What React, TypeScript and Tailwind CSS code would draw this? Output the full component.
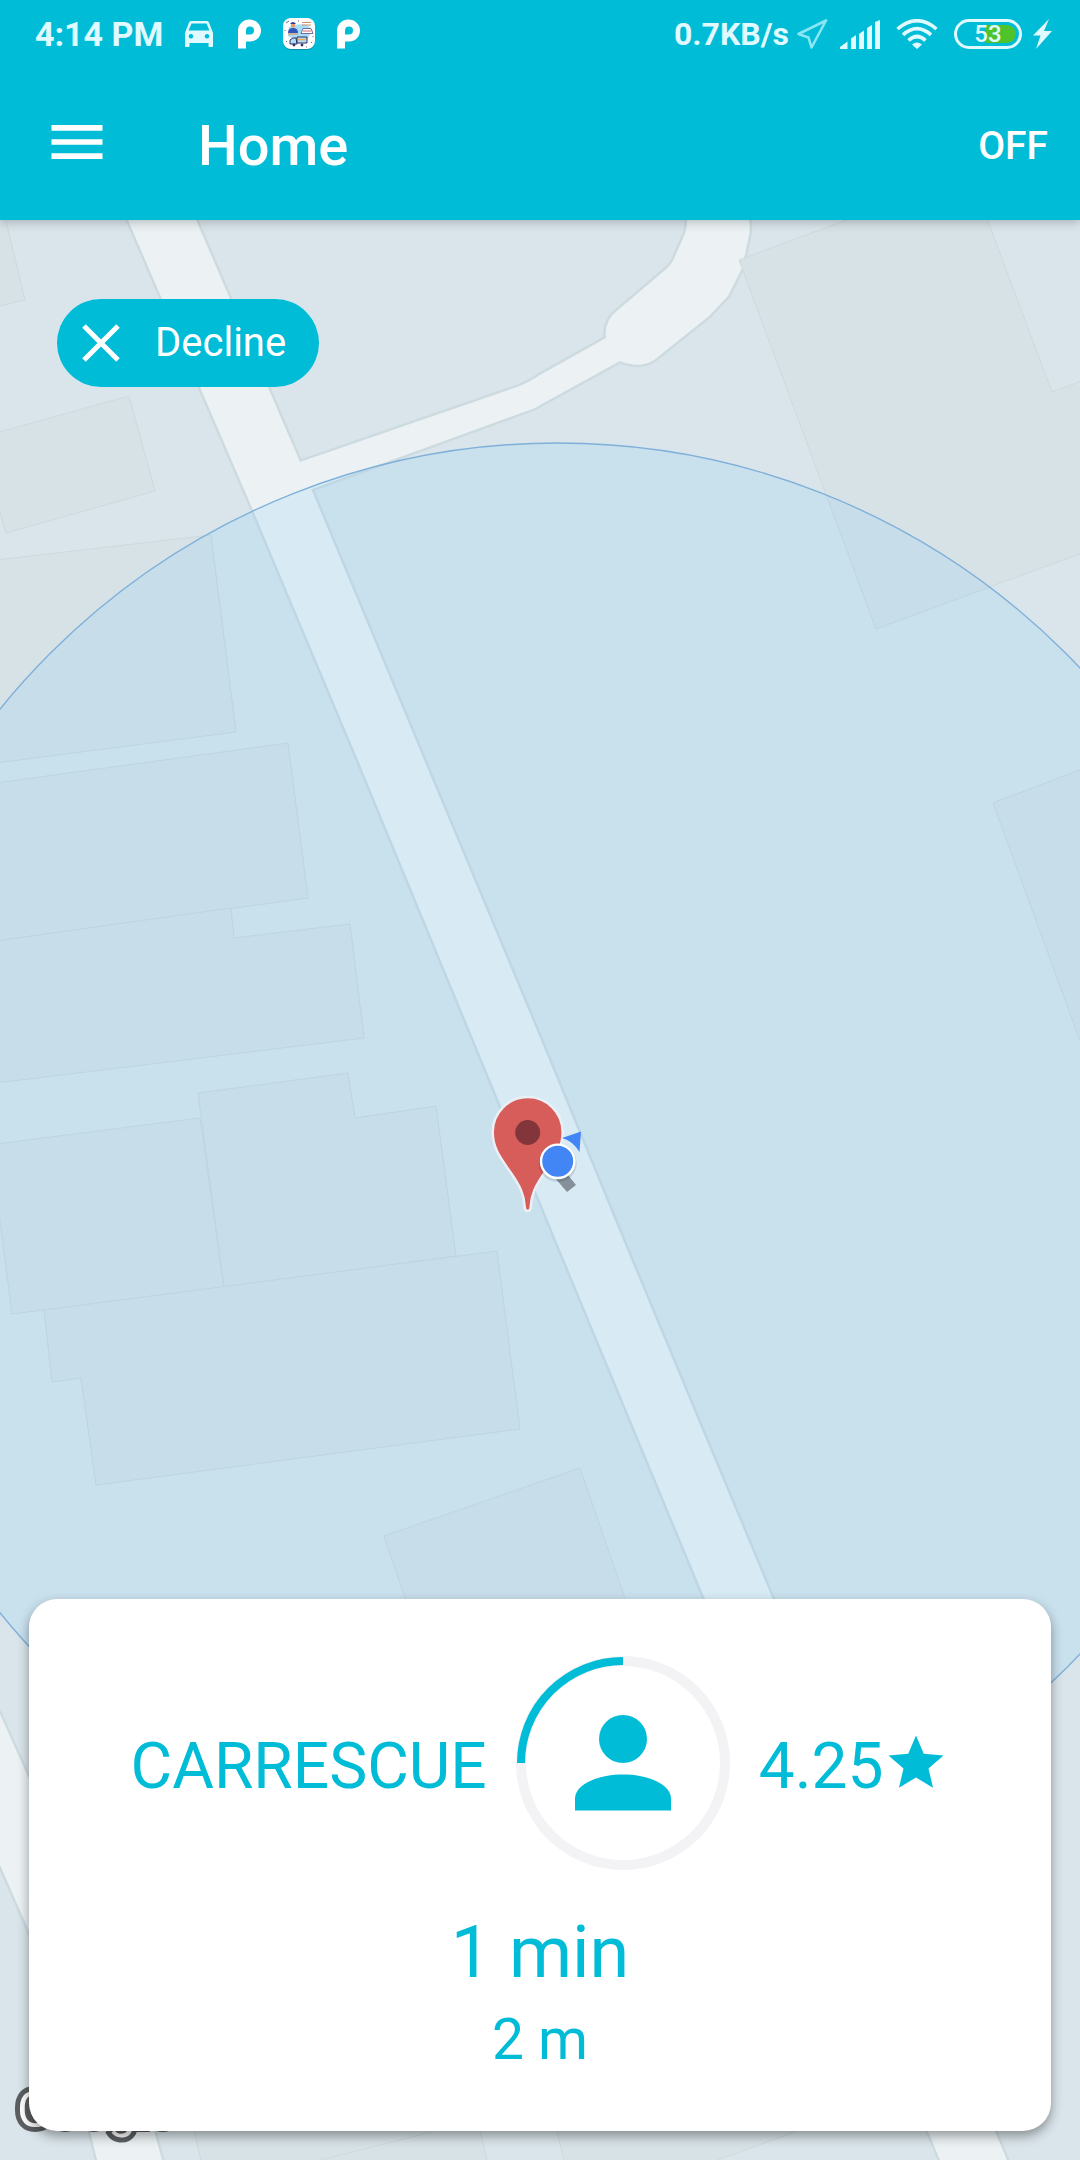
import React from "react";

const BUILDINGS = [
  "-4,200 1,200 25,300 -4,307",
  "-4,433 129,396 155,491 6,533 -4,498",
  "-4,560 211,535 236,732 -4,763",
  "-4,783 288,743 308,898 -4,941",
  "-4,941 231,908 234,938 350,924 364,1038 -4,1083",
  "-4,1144 200,1118 224,1287 12,1314 -4,1190",
  "198,1093 348,1073 355,1118 436,1106 456,1256 224,1287",
  "44,1310 497,1251 520,1429 96,1485 81,1378 52,1382",
  "384,1536 580,1468 660,1700 440,1700",
  "739,260 900,200 980,200 1052,392 1090,378 1090,550 876,629",
  "993,803 1090,766 1090,1068",
  "185,2090 471,2090 488,2165 202,2165",
  "547,2090 993,2060 704,2165 565,2165",
];

const ROADS = [
  "M280 469L300 462L517 387Q528 383 540 375L606 338Q604 320 618 310L664 271Q670 266 673 261L684 236Q687 230 687 220V200H749V220Q751 228 748 240L742 268L728 296L709 316L654 360Q640 369 620 361L540 405Q534 409 524 412L312 489L290 497Z",
  "M119 200L128 220L253 510L358 760L501 1106L556 1240L700 1587L940 2160L950 2180H1016L1007 2160L700 1425L623 1240L540 1038L424 760L300 462L196 220L187 200Z",
  "M-6 1701L29 1779L154 2131L162 2160L170 2180H102L90 2131L29 1931L-6 1851Z",
];

function MapView() {
  return (
    <svg
      className="absolute inset-0 h-full w-full"
      viewBox="0 220 1080 1940"
      preserveAspectRatio="xMidYMid slice"
      role="img"
      aria-label="Map"
    >
      <rect y="200" width="1080" height="1980" fill="#dae5eb" />
      <g fill="none" stroke="#cddbe1" strokeWidth="5" strokeLinejoin="round">
        {ROADS.map((d) => (
          <path key={d} d={d} />
        ))}
      </g>
      <g fill="#ecf2f4">
        {ROADS.map((d) => (
          <path key={d} d={d} />
        ))}
      </g>
      <g fill="#d7e2e7" stroke="#ccd9dd" strokeWidth="1">
        {BUILDINGS.map((points) => (
          <polygon key={points} points={points} />
        ))}
        <path d="M321 2160L435 2131" />
      </g>
      <circle cx="558" cy="1161" r="718" fill="#69c4f8" fillOpacity="0.15" stroke="#7fb0da" strokeWidth="1.4" />
      <path
        d="M527.7 1211c-2.500 0-3-1.500-3-4-.5-13-5-21-13-33-9-13.500-19-24-19-42a35 35 0 0 1 70 0c0 18-10 28.500-19 42-8 12-12.500 20-13 33 0 2.500-.5 4-3 4z"
        fill="#d75d5a"
        stroke="#eaf0f6"
        strokeWidth="2.500"
      />
      <circle cx="527.7" cy="1132.500" r="12.500" fill="#82363c" />
      <path d="M555 1178L567 1192L576 1185L564 1170Z" fill="#84919a" />
      <path d="M562 1138L581 1131.500L579.500 1152Q573 1141 562 1138Z" fill="#4285f4" />
      <circle cx="557.700" cy="1163" r="19" fill="#000" fillOpacity="0.12" />
      <circle cx="557.700" cy="1161.300" r="16.700" fill="#4285f4" stroke="#fff" strokeWidth="2.400" />
    </svg>
  );
}

function ParkingGlyph() {
  return (
    <svg className="h-[30px] w-[23px]" viewBox="0 0 23 30" fill="#fff" aria-hidden="true">
      <path
        fillRule="evenodd"
        d="M0 29.500V11.500A11.500 11 0 0 1 23 11.500C23 18 18 22.500 12 22.500H8V29.500ZM12 7.500a4 4 0 0 0-4 4V15.500H12a4 4 0 0 0 0-8Z"
      />
    </svg>
  );
}

function AppBadge() {
  return (
    <svg className="h-8 w-8" viewBox="0 0 32 32" aria-hidden="true">
      <rect y="1" width="32" height="31" rx="8" fill="#0093aa" />
      <rect width="32" height="31" rx="8" fill="#fff" />
      <path d="M6 9Q16 4 26 8L28 14L25 20L20 24L12 22L5 18Z" fill="#a9dcf8" />
      <circle cx="10" cy="7.500" r="2.200" fill="#e79a6c" />
      <path d="M7.500 6h5V5l-2.500-1-2.500 1z" fill="#2c3f92" />
      <path d="M5 15Q5 10 10 10T15 15Z" fill="#2f56b8" />
      <path d="M5 16h10" stroke="#e79a6c" strokeWidth="1.300" />
      <path d="M19 4.500h9M19 7h9" stroke="#c98258" strokeWidth="0.900" />
      <path d="M18 15.500l2-5h8l2 5z" fill="#fff" stroke="#5c4a80" strokeWidth="0.800" />
      <path d="M20 13h8" stroke="#d2555a" strokeWidth="0.900" />
      <path d="M7 26v-4l3-2h3l1 6zM14 19h10v6H14z" fill="#b5dcf5" stroke="#31316b" strokeWidth="1" />
      <path d="M15 21.500h8" stroke="#f2b24c" strokeWidth="1.600" />
      <circle cx="11" cy="27" r="1.400" fill="#31316b" />
      <circle cx="19" cy="27" r="1.400" fill="#31316b" />
      <path d="M3 5l3-2M2 12v1M3 23l1 1M28 25l1-1M23 29h1M30 18v1M15 3h1" stroke="#555b7c" strokeWidth="0.900" />
    </svg>
  );
}

function StatusBar() {
  return (
    <div className="flex h-[68px] items-center justify-between pl-[35px] pr-[28px] font-bold leading-10 text-[#e0faff]">
      <div className="flex items-center">
        <span className="text-[34px]">4:14 PM</span>
        <svg className="ml-[22px] h-[26px] w-7" viewBox="0 0 28 26" fill="#e0faff" aria-hidden="true">
          <path
            fillRule="evenodd"
            d="M6 0H22Q23.500 0 24 1.500L28 12V25Q28 26 27 26H24.500Q23.500 26 23.500 25V22H4.500V25Q4.500 26 3.500 26H1Q0 26 0 25V12L4 1.500Q4.500 0 6 0ZM6.500 2.500L3.500 9.500H24.500L21.500 2.500ZM6 13a2.300 2.300 0 1 0 .01 0ZM22 13a2.300 2.300 0 1 0 .01 0Z"
          />
        </svg>
        <span className="ml-[25px] flex items-center gap-[22px]">
          <ParkingGlyph />
          <AppBadge />
          <ParkingGlyph />
        </span>
      </div>
      <div className="flex items-center">
        <span className="text-[32px]">0.7KB/s</span>
        <svg className="ml-2 h-[30px] w-[31px]" viewBox="0 0 31 30" fill="none" stroke="#8ae6f2" strokeWidth="2.600" strokeLinejoin="round" aria-hidden="true">
          <path d="M29 1.500L1.500 15L11.500 18.500L14.500 28.500Z" />
        </svg>
        <svg className="ml-3 h-[29px] w-10" viewBox="0 0 40 29" fill="#e0faff" aria-hidden="true">
          <path d="M0 29V27L7.500 21.500V29ZM11 29V18.500L16 15V29ZM19 29V14L24 10.500V29ZM27 29V8L32 5V29ZM35 29V2L40 0V29Z" />
        </svg>
        <svg className="ml-4 h-[30px] w-[42px]" viewBox="0 0 42 30" fill="none" stroke="#e0faff" strokeWidth="3.600" aria-hidden="true">
          <path d="M1.500 10Q21-6.500 40.500 10M7 15.800Q21 3.500 35 15.800M12.500 21.500Q21 13.500 29.500 21.500" />
          <path d="M16 25.500Q21 21.500 26 25.500L21 30Z" fill="#e0faff" stroke="none" />
        </svg>
        <span className="relative ml-4 flex h-[30px] w-[68px] items-center justify-center overflow-hidden rounded-full border-[3px] border-[#e0faff]">
          <span className="absolute inset-y-[3px] left-[29px] right-[3px] rounded-r-full bg-[#4fc32b]" />
          <span className="relative text-[24px] font-medium leading-6">53</span>
        </span>
        <svg className="ml-[11px] h-[30px] w-[19px]" viewBox="0 0 19 30" fill="#e0faff" aria-hidden="true">
          <path d="M16 0L0 16.500H7.500L3 30L19 12H11Z" />
        </svg>
      </div>
    </div>
  );
}

export default function App() {
  return (
    <div className="flex min-h-screen flex-col overflow-hidden bg-[#dae5eb] font-['Roboto',sans-serif]">
      <header className="relative z-10 bg-[#00bcd7] text-white shadow-[0_2px_10px_rgba(0,0,0,0.25)]">
        <StatusBar />
        <div className="flex h-[152px] items-center pl-[43px] pr-8 pt-1">
          <button type="button" aria-label="Menu" className="mb-2">
            <svg className="h-[68px] w-[68px]" viewBox="0 0 24 24" fill="currentColor" aria-hidden="true">
              <path d="M3 6h18v2H3zM3 11h18v2H3zM3 16h18v2H3z" />
            </svg>
          </button>
          <h1 className="ml-[87px] flex-1 text-[56px] font-medium leading-[72px]">Home</h1>
          <button type="button" className="text-[39px] font-medium leading-[48px]">
            OFF
          </button>
        </div>
      </header>

      <main className="relative flex flex-1 flex-col">
        <MapView />
        <button
          type="button"
          className="relative ml-[57px] mt-[79px] flex h-[88px] items-center self-start rounded-full bg-[#00bcd7] pl-6 pr-[33px] text-[40px] leading-[48px] text-white"
        >
          <svg className="h-10 w-10" viewBox="0 0 40 40" stroke="currentColor" strokeWidth="5" aria-hidden="true">
            <path d="M3 3L37 37M37 3L3 37" />
          </svg>
          <span className="ml-[34px]">Decline</span>
        </button>

        <span
          aria-hidden="true"
          className="absolute bottom-5 left-[17px] text-[50px] leading-[60px] text-white [-webkit-text-stroke:10px_#5c5f61] [paint-order:stroke_fill]"
        >
          Google
        </span>

        <section className="relative mx-[29px] mb-[29px] mt-auto flex flex-col items-center rounded-[28px] bg-white pb-[50px] pt-14 text-[#00bcd7] shadow-[0_5px_12px_rgba(0,0,0,0.38)]">
          <div className="flex items-center justify-center gap-7 text-[64px] leading-[76px]">
            <span className="pt-2">CARRESCUE</span>
            <svg className="h-[216px] w-[216px]" viewBox="0 0 216 216" aria-hidden="true">
              <circle cx="108" cy="108" r="102" fill="none" stroke="#f3f3f5" strokeWidth="10" />
              <path d="M6 108A102 102 0 0 1 108 6" fill="none" stroke="#00bcd7" strokeWidth="8" />
              <circle cx="108" cy="84" r="24" fill="#00bcd7" />
              <path d="M108 119.500C134.500 119.500 156 130 156 143.500V155.500H60V143.500C60 130 81.500 119.500 108 119.500Z" fill="#00bcd7" />
            </svg>
            <span className="flex items-center">
              <span className="pt-2">4.25</span>
              <svg className="h-[66px] w-[66px]" viewBox="0 0 24 24" fill="currentColor" role="img" aria-label="stars">
                <path d="M12 17.270L18.180 21L16.540 13.970L22 9.240L14.810 8.620L12 2L9.190 8.620L2 9.240L7.450 13.970L5.820 21Z" />
              </svg>
            </span>
          </div>
          <p className="mt-9 text-[72px] leading-[92px]">1 min</p>
          <p className="text-[57px] leading-[82px]">2 m</p>
        </section>
      </main>
    </div>
  );
}
